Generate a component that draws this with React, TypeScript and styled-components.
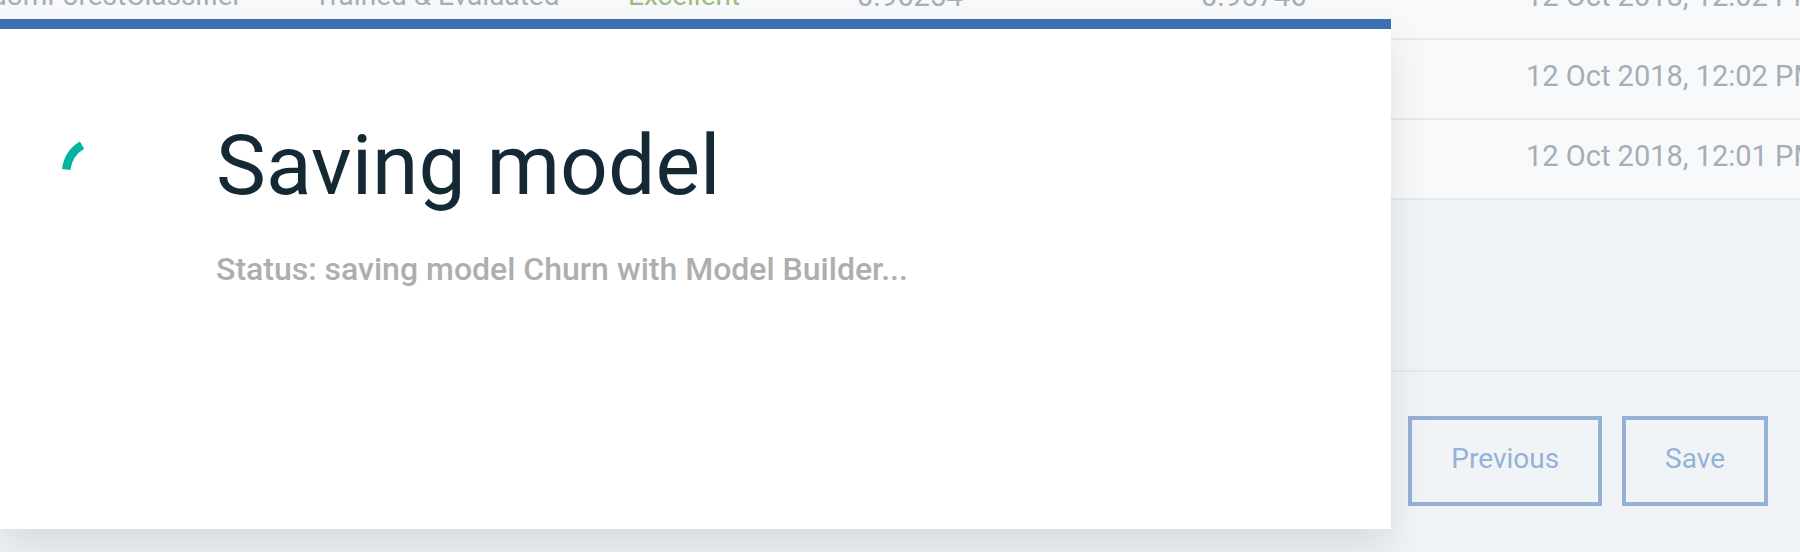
import React from "react";
import styled, { createGlobalStyle } from "styled-components";

const GlobalStyle = createGlobalStyle`
  * {
    box-sizing: border-box;
  }

  body {
    margin: 0;
    background: #f0f4f7;
    font-family: Roboto, "Liberation Sans", sans-serif;
  }
`;

const Page = styled.div`
  position: relative;
  display: flex;
  flex-direction: column;
  min-height: 100vh;
  overflow: hidden;
`;

/* The list is scrolled by half a row, so its first row is cut at the top. */
const ScrolledList = styled.main`
  margin-top: -40px;
`;

const Models = styled.table`
  width: 100%;
  table-layout: fixed;
  border-collapse: separate;
  border-spacing: 0;
  background: #f8f9fb;
`;

const Column = styled.col<{ $width?: number }>`
  width: ${({ $width }) => ($width ? `${$width}px` : "auto")};
`;

const Cell = styled.td<{ $tone?: "good" }>`
  height: 80px;
  padding: 20px 0 26px;
  border-bottom: 2px solid #e7eaec;
  color: ${({ $tone }) => ($tone === "good" ? "#9fba7f" : "#a5adb6")};
  font-size: 28px;
  line-height: 32px;
  white-space: nowrap;
`;

const NameCell = styled(Cell)`
  padding-right: 72px;
`;

const Name = styled.span`
  display: flex;
  justify-content: flex-end;
`;

const FigureCell = styled(Cell)`
  font-size: 29px;
`;

const Footer = styled.footer`
  display: flex;
  justify-content: flex-end;
  gap: 20px;
  margin-top: auto;
  padding: 44px 32px 46px;
  border-top: 2px solid #e6eaec;
`;

const OutlineButton = styled.button`
  padding: 23px 39px 27px;
  border: 4px solid #96b1d6;
  background: transparent;
  color: #96b1d6;
  font-family: inherit;
  font-size: 28px;
  line-height: 32px;
`;

const Modal = styled.section`
  position: absolute;
  top: 19px;
  left: 0;
  right: 409px;
  display: flex;
  align-items: flex-start;
  gap: 79px;
  min-height: 510px;
  padding: 87px 61px;
  border-top: 10px solid #3d70b2;
  background: #ffffff;
  box-shadow: 0 20px 40px rgba(0, 0, 0, 0.1);
`;

const Spinner = styled.svg`
  flex: none;
  width: 76px;
  height: 76px;
  margin-top: 19px;
`;

const Message = styled.div`
  display: flex;
  flex-direction: column;
  gap: 33px;
`;

const Title = styled.h1`
  margin: 0;
  color: #152935;
  font-size: 84px;
  font-weight: 400;
  line-height: 100px;
`;

const Status = styled.p`
  margin: 0;
  color: #aeaeae;
  font-size: 32px;
  font-weight: 500;
  line-height: 40px;
`;

type Model = {
  name?: string;
  status?: string;
  performance?: string;
  roc?: string;
  pr?: string;
  evaluated: string;
};

const models: Model[] = [
  {
    name: "RandomForestClassifier",
    status: "Trained & Evaluated",
    performance: "Excellent",
    roc: "0.96254",
    pr: "0.95746",
    evaluated: "12 Oct 2018, 12:02 PM",
  },
  { evaluated: "12 Oct 2018, 12:02 PM" },
  { evaluated: "12 Oct 2018, 12:01 PM" },
];

export default function App() {
  return (
    <Page>
      <GlobalStyle />
      <ScrolledList>
        <Models>
          <colgroup>
            <Column $width={314} />
            <Column $width={314} />
            <Column $width={229} />
            <Column $width={344} />
            <Column $width={325} />
            <Column />
          </colgroup>
          <tbody>
            {models.map((model, index) => (
              <tr key={index}>
                <NameCell>
                  <Name>{model.name}</Name>
                </NameCell>
                <Cell>{model.status}</Cell>
                <Cell $tone="good">{model.performance}</Cell>
                <FigureCell>{model.roc}</FigureCell>
                <FigureCell>{model.pr}</FigureCell>
                <FigureCell>{model.evaluated}</FigureCell>
              </tr>
            ))}
          </tbody>
        </Models>
      </ScrolledList>
      <Footer>
        <OutlineButton type="button">Previous</OutlineButton>
        <OutlineButton type="button">Save</OutlineButton>
      </Footer>
      <Modal role="dialog" aria-labelledby="saving-title">
        <Spinner viewBox="0 0 76 76" aria-hidden="true">
          <path
            d="M5.2 34.6A33 33 0 0 1 21 10.2"
            fill="none"
            stroke="#00b4a0"
            strokeWidth="8.4"
          />
        </Spinner>
        <Message>
          <Title id="saving-title">Saving model</Title>
          <Status role="status">
            Status: saving model Churn with Model Builder...
          </Status>
        </Message>
      </Modal>
    </Page>
  );
}
